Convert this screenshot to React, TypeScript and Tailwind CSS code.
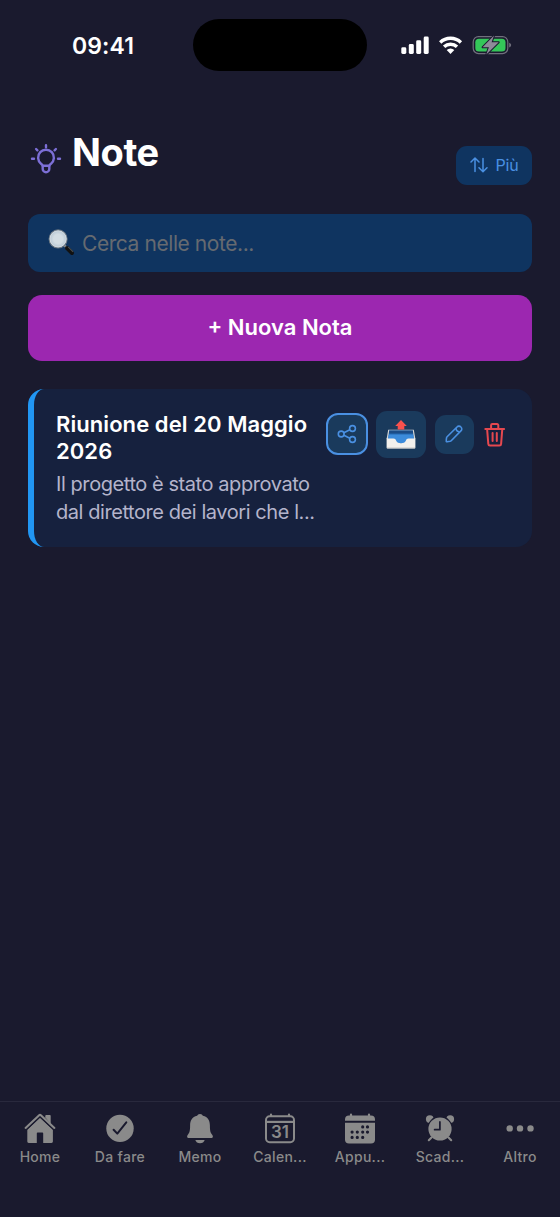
import { FC, ReactNode } from 'react';

interface Tab {
  label: string;
  icon: ReactNode;
}

const tabs: Tab[] = [
  {
    label: 'Home',
    icon: (
      <>
        <path d="M16 5.8 28.9 17.8V29.6a1.4 1.4 0 0 1-1.4 1.4H19.2V21.4a.8.8 0 0 0-.8-.8h-4.8a.8.8 0 0 0-.8.8V31H4.7a1.4 1.4 0 0 1-1.4-1.4V17.8z" />
        <path d="M21.3 5.6V3.9a.8.8 0 0 1 .8-.8h3.8a.8.8 0 0 1 .8.8v8.2z" />
        <path d="M2.4 17.6 14.9 5.7a1.6 1.6 0 0 1 2.2 0L29.6 17.6" fill="none" stroke="#1a1a2e" strokeWidth="1.2" />
        <path d="M1.6 15.9 14.9 3.4a1.6 1.6 0 0 1 2.2 0L30.4 15.9" fill="none" stroke="currentColor" strokeWidth="2.1" strokeLinecap="round" />
      </>
    ),
  },
  {
    label: 'Da fare',
    icon: (
      <>
        <circle cx="16" cy="16.4" r="13.7" />
        <path d="m9.6 17.7 3.7 3.9 9-11.2" fill="none" stroke="#1a1a2e" strokeWidth="2" strokeLinecap="round" strokeLinejoin="round" />
      </>
    ),
  },
  {
    label: 'Memo',
    icon: (
      <>
        <path d="M16 1.9c1.5 0 2.5.8 2.9 1.9 5 1.2 7 4.9 7 9.6 0 5.2.5 7 2.1 9 .7.8 1 1.6.9 2.3-.1.9-.8 1.4-1.8 1.4H4.9c-1 0-1.7-.5-1.8-1.4-.1-.7.2-1.5.9-2.3 1.6-2 2.1-3.8 2.1-9 0-4.7 2-8.4 7-9.6.4-1.1 1.4-1.9 2.9-1.9z" />
        <path d="M11.3 27.9h9.4c-.6 2-2.3 3.3-4.7 3.3s-4.1-1.3-4.7-3.3z" />
      </>
    ),
  },
  {
    label: 'Calen...',
    icon: (
      <>
        <rect x="2" y="4.3" width="28" height="25.9" rx="3.6" fill="none" stroke="currentColor" strokeWidth="2" />
        <path d="M2 9.9h28" stroke="currentColor" strokeWidth="2.2" />
        <path d="M7 4V2.6M25 4V2.6" stroke="currentColor" strokeWidth="2.2" strokeLinecap="round" />
        <text x="16" y="26" textAnchor="middle" fontSize="17" fontWeight="600" textLength="18" className="font-['Inter',sans-serif]">31</text>
      </>
    ),
  },
  {
    label: 'Appu...',
    icon: (
      <>
        <path d="M1 8.8V7.6a4 4 0 0 1 4-4h22a4 4 0 0 1 4 4v1.2z" />
        <path d="M1 10.8h30v16.6a4 4 0 0 1-4 4H5a4 4 0 0 1-4-4z" />
        <path d="M7 4V2.6M25 4V2.6" stroke="currentColor" strokeWidth="2.2" strokeLinecap="round" />
        <path
          d="M18.7 14.9h0M23.5 14.9h0M8.1 20.1h0M13.3 20.1h0M18.7 20.1h0M23.5 20.1h0M8.1 25.4h0M13.3 25.4h0M18.7 25.4h0"
          stroke="#1a1a2e"
          strokeWidth="3.2"
          strokeLinecap="round"
        />
      </>
    ),
  },
  {
    label: 'Scad...',
    icon: (
      <>
        <circle cx="5.8" cy="7.1" r="3.9" />
        <circle cx="26.2" cy="7.1" r="3.9" />
        <circle cx="16" cy="17" r="12.9" fill="#1a1a2e" />
        <path d="m7.5 25.5-2.7 2.7M24.5 25.5l2.7 2.7" stroke="currentColor" strokeWidth="2.1" strokeLinecap="round" />
        <circle cx="16" cy="17" r="11.6" />
        <path d="M15.9 9.9v7.8h-5.3" fill="none" stroke="#1a1a2e" strokeWidth="1.7" strokeLinecap="round" strokeLinejoin="round" />
      </>
    ),
  },
  {
    label: 'Altro',
    icon: (
      <>
        <circle cx="5.7" cy="16.4" r="3.2" />
        <circle cx="16" cy="16.4" r="3.2" />
        <circle cx="26.5" cy="16.4" r="3.2" />
      </>
    ),
  },
];

const StatusBar: FC = () => (
  <div className="flex h-[90px] shrink-0 items-start">
    <div className="w-[193px] pl-[72px] pt-[31px] text-[23px] font-semibold leading-[30px] text-white">
      <span className="tracking-[0.1px]">09:41</span>
    </div>
    <div className="mt-[19px] h-[51.5px] w-[174px] rounded-full bg-black" />
    <svg className="ml-[33px] mt-[34px]" width="114" height="22" viewBox="400 34 114 22">
      <g fill="#fff">
        <rect x="401.3" y="47.3" width="5" height="6.7" rx="1.4" />
        <rect x="408.8" y="44" width="5" height="10" rx="1.4" />
        <rect x="416.2" y="40.3" width="5" height="13.7" rx="1.4" />
        <rect x="423.7" y="36.6" width="5" height="17.4" rx="1.4" />
      </g>
      <g fill="none" stroke="#fff" strokeWidth="3.4">
        <path d="M440.2 42.4a15 15 0 0 1 20.7 0" />
        <path d="M444.1 46.8a9.3 9.3 0 0 1 12.9 0" />
      </g>
      <path d="M450.5 53.9 446.7 50a5.5 5.5 0 0 1 7.6 0z" fill="#fff" />
      <rect x="473.2" y="36.6" width="34.6" height="17" rx="5.3" fill="none" stroke="#706f7c" strokeWidth="1.2" />
      <path d="M509.2 42.8c1.2.5 1.9 1.3 1.9 2.3s-.7 1.9-1.9 2.4z" fill="#706f7c" />
      <rect x="475.3" y="38.7" width="30.2" height="12.9" rx="3.6" fill="#34c759" />
      <path
        d="M494 35.6 482.6 47.3h6.3L486.3 54.5 498.7 42.3h-7.1z"
        fill="#8e8b99"
        stroke="#1a1a2e"
        strokeWidth="2"
        strokeLinejoin="round"
        paintOrder="stroke"
      />
    </svg>
  </div>
);

const BulbIcon: FC = () => (
  <svg className="mt-[7px]" width="32" height="32" viewBox="0 0 32 32" fill="none" stroke="#7c6fd6" strokeWidth="2.4" strokeLinecap="round" strokeLinejoin="round">
    <path d="M12.7 22.8c-.2-1-.8-1.5-1.7-2.1a7.9 7.9 0 1 1 10 0c-.9.6-1.5 1.1-1.7 2.1z" />
    <path d="M12.7 23v2.9a3.3 3.3 0 0 0 6.6 0V23" />
    <path d="M16 2.3v2M2 15.7h2M28 15.7h2M6.1 6l1.3 1.3M25.9 6l-1.3 1.3" />
  </svg>
);

const SearchIcon: FC = () => (
  <svg width="28" height="28" viewBox="0 0 28 28">
    <defs>
      <linearGradient id="handle" x1="0" y1="1" x2="1" y2="0">
        <stop offset="0.35" stopColor="#080808" />
        <stop offset="0.6" stopColor="#6b6b66" />
      </linearGradient>
      <radialGradient id="lens">
        <stop offset="0.5" stopColor="#d3dde3" />
        <stop offset="1" stopColor="#b3c4d2" />
      </radialGradient>
    </defs>
    <path d="m16.5 16.5 3 3" stroke="#8f9393" strokeWidth="2.4" />
    <path d="m19 19 5 5" stroke="#111" strokeWidth="4" strokeLinecap="round" />
    <path d="m20 18.1 4.9 4.9" stroke="url(#handle)" strokeWidth="1.3" />
    <circle cx="10.1" cy="9.9" r="9" fill="url(#lens)" stroke="#697682" strokeWidth="1.1" />
    <circle cx="10.1" cy="9.9" r="8.1" fill="none" stroke="#d9dee2" strokeWidth="0.8" />
  </svg>
);

const OutboxIcon: FC = () => (
  <svg width="30" height="31" viewBox="0 0 30 31">
    <path d="M2.2 10.8h25.6l1.6 9.2H.6z" fill="#d9d8d5" />
    <path d="M3.2 11.6h23.6l1.2 9.4H2z" fill="#2468b0" />
    <path d="M3.2 11.6h23.6l.4 3H2.8z" fill="#1b4c87" />
    <path d="M2.7 15.5h24.6l.6 5.3-7 3.5H9l-7-3.5z" fill="#3c8bdb" />
    <path d="M15 .9 20.8 7H18.3v3.6h-6.6V7H9.2z" fill="#f8514d" />
    <path d="M.6 19.600h6.900c1.600 0 2 .8 2.700 2.200.9 1.800 2.500 2.500 4.800 2.500s3.900-.7 4.800-2.500c.7-1.400 1.100-2.200 2.700-2.200h6.900v8.800a1 1 0 0 1-1 1H1.600a1 1 0 0 1-1-1z" fill="#f2f0ed" />
    <path d="M.9 28.9h28.2" stroke="#c9c8c6" strokeWidth="0.9" />
  </svg>
);

const NoteActions: FC = () => (
  <div className="flex h-[46.5px] items-center">
    <button className="flex h-[42px] w-[42px] items-center justify-center rounded-[12px] border-2 border-[#4a90e2] bg-[#1a3a5c]">
      <svg className="shrink-0" width="20" height="20" viewBox="0 0 20 20" fill="none" stroke="#4a90e2" strokeWidth="1.6">
        <circle cx="4.2" cy="10" r="2.9" />
        <circle cx="15.5" cy="4.5" r="2.9" />
        <circle cx="15.5" cy="15.5" r="2.9" />
        <path d="m6.9 8.7 5.9-2.9M6.9 11.3l5.9 2.9" />
      </svg>
    </button>
    <button className="ml-2 flex h-[46.5px] w-[50px] items-center justify-center rounded-[11px] bg-[#1a3a5c]">
      <OutboxIcon />
    </button>
    <button className="ml-[8.5px] flex h-[39px] w-[39px] items-center justify-center rounded-[11px] bg-[#1a3a5c]">
      <svg width="18" height="18" viewBox="0 0 18 18" fill="none" stroke="#4a90e2" strokeWidth="1.6" strokeLinejoin="round">
        <path d="M1.2 15.900 1.500 13c.1-.5.3-.9.6-1.200L12 2a2.600 2.600 0 0 1 3.900 0 2.600 2.600 0 0 1 0 3.900L6.200 15.700c-.3.3-.7.5-1.200.6l-2.900.5a.8.8 0 0 1-.9-.9z" />
        <path d="m10.900 3.200c.2 2 1.800 3.600 3.800 3.800" />
      </svg>
    </button>
    <svg className="ml-[10.5px]" width="22" height="25" viewBox="0 0 22 25" fill="none" stroke="#e5484f" strokeWidth="2" strokeLinecap="round" strokeLinejoin="round">
      <path d="M1.3 7h18.8M3.1 7l1.2 14.9a1.7 1.7 0 0 0 1.7 1.6h9.4a1.7 1.7 0 0 0 1.7-1.6L18.3 7" />
      <path d="M7.1 6.8V3.2a1.2 1.2 0 0 1 1.2-1.2h4.8a1.2 1.2 0 0 1 1.2 1.2v3.6M8.6 11v8M12.8 11v8" />
    </svg>
  </div>
);

const NoteCard: FC = () => (
  <article className="mt-[28px] flex h-[158.5px] items-start rounded-[16px] border-l-[6px] border-[#2196f3] bg-[#16213e] pl-[22px] pt-[22.5px]">
    <div className="w-[270px] shrink-0 whitespace-nowrap">
      <h2 className="text-[22px] font-semibold leading-[26.5px] tracking-[0.07px] text-white">
        Riunione del 20 Maggio
        <br />
        2026
      </h2>
      <p className="mt-[6px] text-[20px] leading-[28px] tracking-[-0.43px] text-[#b4b4cb]">
        Il progetto è stato approvato
        <br />
        dal direttore dei lavori che l...
      </p>
    </div>
    <NoteActions />
  </article>
);

const TabBar: FC = () => (
  <nav className="grid h-[116px] grid-cols-7 border-t border-[#29293d] pt-[10px] text-[#8a8a8a]">
    {tabs.map((tab) => (
      <a key={tab.label} className="flex flex-col items-center">
        <svg width="32" height="32" viewBox="0 0 32 32" fill="currentColor">
          {tab.icon}
        </svg>
        <span className="mt-[4px] text-[14px] font-medium leading-[18px] tracking-[0.3px]">{tab.label}</span>
      </a>
    ))}
  </nav>
);

const App: FC = () => {
  return (
    <div className="flex h-[1217px] w-[560px] flex-col overflow-hidden bg-[#1a1a2e] font-['Inter',sans-serif]">
      <StatusBar />
      <main className="flex-1 px-7 pt-[36px]">
        <header className="flex h-[59px] items-start">
          <div className="flex flex-1 items-start pl-[2px] pt-[10px]">
            <BulbIcon />
            <h1 className="ml-[10px] text-[38px] font-bold leading-[32px] tracking-[-0.4px] text-white">Note</h1>
          </div>
          <button className="mt-[20px] flex h-[38.5px] w-[76px] items-center justify-center gap-[8px] rounded-[11px] bg-[#0f3460] text-[16px] leading-5 tracking-[-0.2px] text-[#4a90e2]">
            <svg width="18" height="16" viewBox="0 0 18 16" fill="none" stroke="currentColor" strokeWidth="1.5" strokeLinecap="round" strokeLinejoin="round">
              <path d="M1 5 5 1l4 4M5 1.2v13.3M9 10.7l4 4 4-4M13 14.5V1.5" />
            </svg>
            <span>Più</span>
          </button>
        </header>
        <div className="mt-[29px] flex h-[58px] items-center gap-[6px] rounded-[12px] bg-[#0f3460] pl-5 text-[21px] text-[#666a70]">
          <SearchIcon />
          <span className="mt-[2px] whitespace-nowrap tracking-[-0.43px]">Cerca nelle note...</span>
        </div>
        <button className="mt-[23px] flex h-[65.5px] w-full items-center justify-center rounded-[14px] bg-[#9c27b0] text-[22px] font-semibold text-white">
          + Nuova Nota
        </button>
        <NoteCard />
      </main>
      <TabBar />
    </div>
  );
};

export default App;
